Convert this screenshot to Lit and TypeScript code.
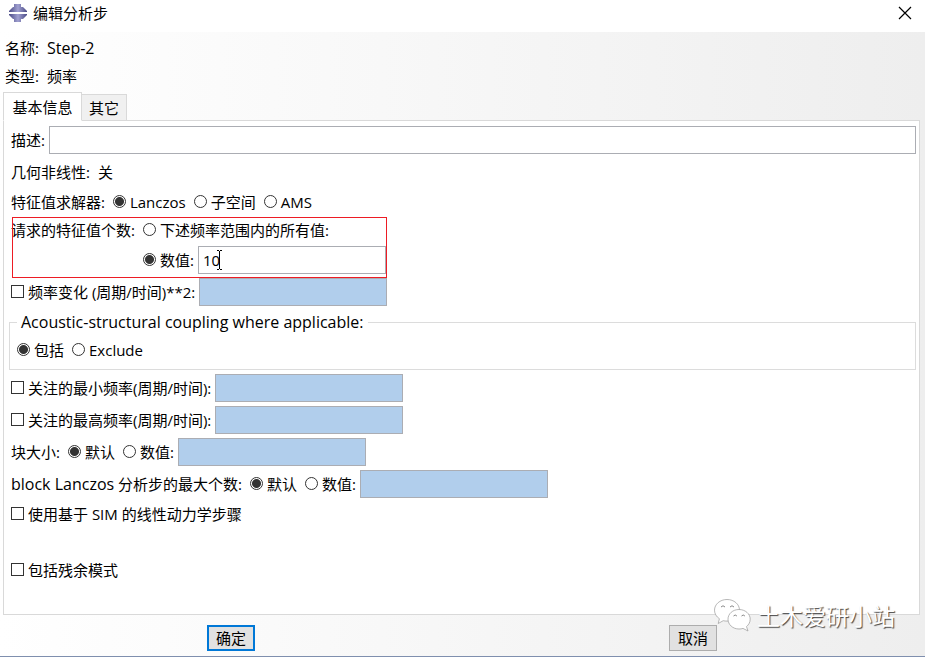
import { LitElement, html, css } from "lit";
import { customElement } from "lit/decorators.js";

const radio = (name: string, text: string, checked = false) => html`
  <label class="option"><input type="radio" name=${name} ?checked=${checked} /><span>${text}</span></label>
`;

const check = (text: string) => html`
  <label class="option"><input type="checkbox" /><span>${text}</span></label>
`;

const disabledField = (label: string) => html`
  <input class="field" type="text" aria-label=${label} disabled />
`;

@customElement("app-root")
export class AppRoot extends LitElement {
  static styles = css`
    :host {
      display: block;
      font-family: "Open Sans", "Noto Sans CJK SC", sans-serif;
      font-size: 15px;
      line-height: 24px;
      color: #000;
    }
    * {
      box-sizing: border-box;
    }
    .dialog {
      position: relative;
      display: flex;
      flex-direction: column;
      min-height: 100vh;
      background: linear-gradient(to right, #fff, #eee);
      border-bottom: 1px solid #7f8fae;
    }
    .titlebar {
      display: flex;
      align-items: center;
      height: 32px;
      padding: 0 12px 6px 8px;
      background: #fff;
    }
    .logo {
      width: 20px;
      height: 20px;
      margin-right: 5px;
    }
    .title {
      flex: 1;
      margin: 0;
      font-size: 15px;
      font-weight: 400;
    }
    .close {
      display: flex;
      padding: 0;
      border: 0;
      background: none;
    }
    .latin {
      font-size: 16px;
    }
    .facts {
      margin: 0;
      padding: 2px 5px 0;
    }
    .fact {
      display: flex;
      gap: 8px;
      line-height: 28px;
    }
    .fact dd {
      margin: 0;
    }
    .tabs {
      display: flex;
      align-items: flex-end;
      height: 31px;
      padding-left: 3px;
      margin-bottom: -1px;
      z-index: 1;
    }
    .tab {
      height: 27px;
      padding: 0 7px;
      font: inherit;
      color: inherit;
      background: #f0f0f0;
      border: 1px solid #d9d9d9;
      border-left: 0;
    }
    .tab.selected {
      min-width: 79px;
      height: 29px;
      background: #fff;
      border-left: 1px solid #d9d9d9;
      border-bottom-color: #fff;
    }
    .panel {
      flex: 1;
      display: flex;
      flex-direction: column;
      gap: 4px;
      margin: 0 5px 0 3px;
      padding: 5px 3px 3px 7px;
      background: #fff;
      border: 1px solid #d9d9d9;
    }
    .row {
      display: flex;
      align-items: center;
      gap: 8px;
      min-height: 24px;
    }
    .row.tall {
      min-height: 28px;
    }
    .spaced {
      margin-top: 28px;
    }
    .pair {
      display: flex;
      align-items: center;
      gap: 4px;
    }
    .option {
      display: flex;
      align-items: center;
      gap: 4px;
      white-space: nowrap;
    }
    input[type="radio"],
    input[type="checkbox"] {
      appearance: none;
      flex: none;
      width: 13px;
      height: 13px;
      margin: 0 0 2px;
      background: #fff;
      border: 1px solid #333;
    }
    input[type="radio"] {
      border-radius: 50%;
    }
    input[type="radio"]:checked {
      background: radial-gradient(circle, #333 4px, #fff 5px);
    }
    .field {
      width: 188px;
      height: 28px;
      padding: 0 4px;
      font: inherit;
      color: inherit;
      background: #fff;
      border: 1px solid #abadb3;
      border-radius: 0;
      outline: 0;
    }
    .field:disabled {
      background: #b1ceec;
    }
    .field.wide {
      flex: 1;
      width: auto;
    }
    .count {
      position: relative;
      align-self: flex-start;
      display: grid;
      grid-template-columns: auto auto;
      column-gap: 8px;
      row-gap: 4px;
      align-items: center;
    }
    .count .pair {
      grid-column: 2;
    }
    .highlight {
      position: absolute;
      inset: -1px -1px -4px 1px;
      border: 1px solid #ed1c24;
      pointer-events: none;
    }
    .entry {
      position: relative;
      display: flex;
    }
    .caret {
      position: absolute;
      left: 18px;
      top: 4px;
      pointer-events: none;
    }
    .group {
      height: 60px;
      margin: 0 0 0 -2px;
      padding: 4px 7px 0;
      border: 1px solid #dcdcdc;
    }
    .group legend {
      padding: 0 4px;
      line-height: 24px;
    }
    .footer {
      display: flex;
      justify-content: space-between;
      height: 41px;
      padding: 10px 208px 0 207px;
    }
    .button {
      width: 48px;
      height: 26px;
      padding: 0;
      font: inherit;
      line-height: 22px;
      color: inherit;
      background: #e1e1e1;
      border: 1px solid #adadad;
    }
    .button.primary {
      border: 2px solid #0078d7;
    }
    .watermark {
      position: absolute;
      right: 30px;
      bottom: 24px;
      display: flex;
      align-items: center;
      gap: 6px;
      font-size: 23px;
      line-height: 32px;
      color: #fff;
      text-shadow: 1px 1px 1px #444;
      pointer-events: none;
    }
  `;

  render() {
    return html`
      <main class="dialog">
        <header class="titlebar">
          <svg class="logo" viewBox="0 0 20 20" aria-hidden="true">
            <defs>
              <linearGradient id="metal">
                <stop offset="0" stop-color="#4a4a86" />
                <stop offset="0.5" stop-color="#a0a0d0" />
                <stop offset="1" stop-color="#4a4a86" />
              </linearGradient>
            </defs>
            <path fill="url(#metal)" d="M6 1h7v3h2l4 4v1H1V8l4-4h1zM1 11h18v1l-4 4h-2v3H6v-3H5l-4-4z" />
          </svg>
          <h1 class="title">编辑分析步</h1>
          <button class="close" aria-label="关闭">
            <svg width="16" height="16" viewBox="0 0 16 16" fill="none" stroke="#000" stroke-width="1.2">
              <path d="M2 2l12 12M14 2L2 14" />
            </svg>
          </button>
        </header>

        <dl class="facts">
          <div class="fact"><dt>名称:</dt><dd class="latin">Step-2</dd></div>
          <div class="fact"><dt>类型:</dt><dd>频率</dd></div>
        </dl>

        <div class="tabs" role="tablist">
          <button class="tab selected" role="tab" aria-selected="true">基本信息</button>
          <button class="tab" role="tab" aria-selected="false">其它</button>
        </div>

        <section class="panel" role="tabpanel">
          <div class="pair">
            <label for="description">描述:</label>
            <input id="description" class="field wide" type="text" />
          </div>
          <div class="row tall"><span>几何非线性:</span><span>关</span></div>
          <div class="row">
            <span>特征值求解器:</span>
            ${radio("solver", "Lanczos", true)} ${radio("solver", "子空间")} ${radio("solver", "AMS")}
          </div>
          <div class="count">
            <span>请求的特征值个数:</span>
            ${radio("count", "下述频率范围内的所有值:")}
            <div class="pair">
              ${radio("count", "数值:", true)}
              <div class="entry">
                <input class="field" type="text" aria-label="数值" value="10" />
                <svg class="caret" width="7" height="20" viewBox="0 0 7 20" fill="none" stroke="#000" aria-hidden="true">
                  <path d="M1 .5h2M4 .5h2M3.500 1v18M1 19.500h2M4 19.500h2" />
                </svg>
              </div>
            </div>
            <div class="highlight"></div>
          </div>
          <div class="pair">${check("频率变化 (周期/时间)**2:")} ${disabledField("频率变化")}</div>
          <fieldset class="group">
            <legend class="latin">Acoustic-structural coupling where applicable:</legend>
            <div class="row">${radio("coupling", "包括", true)} ${radio("coupling", "Exclude")}</div>
          </fieldset>
          <div class="pair">${check("关注的最小频率(周期/时间):")} ${disabledField("关注的最小频率")}</div>
          <div class="pair">${check("关注的最高频率(周期/时间):")} ${disabledField("关注的最高频率")}</div>
          <div class="row">
            <span>块大小:</span>
            ${radio("block", "默认", true)}
            <div class="pair">${radio("block", "数值:")} ${disabledField("块大小")}</div>
          </div>
          <div class="row">
            <span><span class="latin">block Lanczos</span> 分析步的最大个数:</span>
            ${radio("steps", "默认", true)}
            <div class="pair">${radio("steps", "数值:")} ${disabledField("最大个数")}</div>
          </div>
          <div class="row">${check("使用基于 SIM 的线性动力学步骤")}</div>
          <div class="row spaced">${check("包括残余模式")}</div>
        </section>

        <footer class="footer">
          <button class="button primary">确定</button>
          <button class="button">取消</button>
        </footer>

        <div class="watermark">
          <svg width="37" height="33" viewBox="0 0 37 33" fill="#fff" stroke="#999" stroke-width="0.7" aria-hidden="true">
            <path d="M13 .5C6 .5.5 5.300.5 11.200c0 3.500 1.900 6.500 4.900 8.500L4.200 24.500l5-2.800c1.200.3 2.500.4 3.800.4 7 0 12.500-4.900 12.500-10.900S20 .5 13 .5z" />
            <path d="M25 10.500c-6.200 0-11 4.300-11 9.700s4.800 9.800 11 9.800c1.500 0 2.800-.2 4-.6l5 2.600-1.500-4.400c2.200-1.800 3.700-4.400 3.700-7.400 0-5.400-5-9.700-11.200-9.700z" />
            <path fill="none" stroke="#555" d="M7 8q2-2.500 4 0M16 8q2-2.500 4 0M19.500 17q1.700-2 3.400 0M27.500 17q1.700-2 3.400 0" />
          </svg>
          <span>土木爱研小站</span>
        </div>
      </main>
    `;
  }
}
